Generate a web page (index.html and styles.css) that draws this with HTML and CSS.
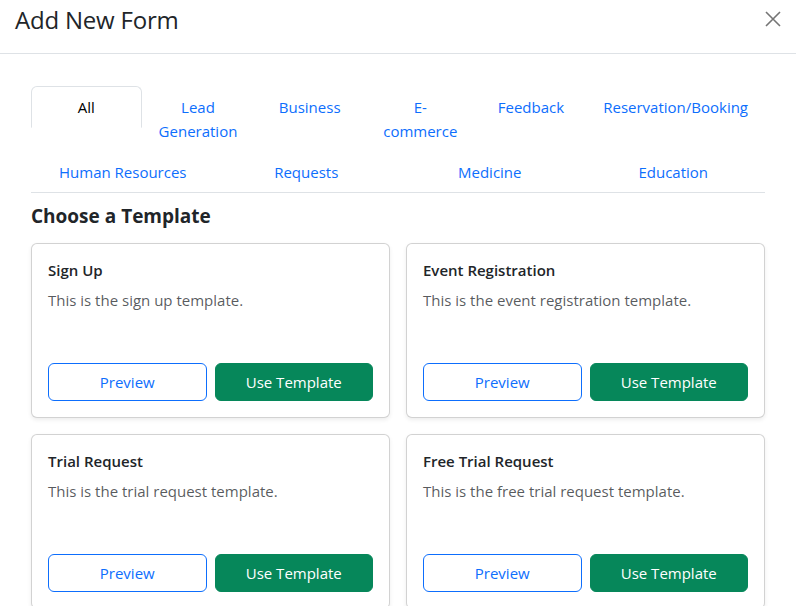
FILE: index.html
```html
<!DOCTYPE html>
<html lang="en">
<head>
<meta charset="utf-8">
<title>Add New Form</title>
<link rel="stylesheet" href="styles.css">
</head>
<body>
<div class="modal">
  <div class="modal-header">
    <h4 class="modal-title">Add New Form</h4>
    <button class="btn-close" aria-label="Close">
      <svg width="16" height="16" viewBox="0 0 16 16"><path d="M1 1L15 15M15 1L1 15" stroke="currentColor" stroke-width="1.6" fill="none"/></svg>
    </button>
  </div>
  <div class="modal-body">
    <div class="nav-tabs">
      <div class="tab-row">
        <button class="nav-link active">All</button>
        <button class="nav-link">Lead Generation</button>
        <button class="nav-link">Business</button>
        <button class="nav-link">E-commerce</button>
        <button class="nav-link">Feedback</button>
        <button class="nav-link">Reservation/Booking</button>
      </div>
      <div class="tab-row">
        <button class="nav-link">Human Resources</button>
        <button class="nav-link">Requests</button>
        <button class="nav-link">Medicine</button>
        <button class="nav-link">Education</button>
      </div>
    </div>
    <h5 class="section-title">Choose a Template</h5>
    <div class="card-grid">
      <div class="card">
        <h6 class="card-title">Sign Up</h6>
        <p class="card-text">This is the sign up template.</p>
        <div class="card-actions">
          <button class="btn btn-outline">Preview</button>
          <button class="btn btn-success">Use Template</button>
        </div>
      </div>
      <div class="card">
        <h6 class="card-title">Event Registration</h6>
        <p class="card-text">This is the event registration template.</p>
        <div class="card-actions">
          <button class="btn btn-outline">Preview</button>
          <button class="btn btn-success">Use Template</button>
        </div>
      </div>
      <div class="card">
        <h6 class="card-title">Trial Request</h6>
        <p class="card-text">This is the trial request template.</p>
        <div class="card-actions">
          <button class="btn btn-outline">Preview</button>
          <button class="btn btn-success">Use Template</button>
        </div>
      </div>
      <div class="card">
        <h6 class="card-title">Free Trial Request</h6>
        <p class="card-text">This is the free trial request template.</p>
        <div class="card-actions">
          <button class="btn btn-outline">Preview</button>
          <button class="btn btn-success">Use Template</button>
        </div>
      </div>
    </div>
  </div>
</div>
</body>
</html>
```

FILE: styles.css
```css
* { box-sizing: border-box; }

html, body {
  margin: 0;
  padding: 0;
  background: #fff;
}

body {
  font-family: "Open Sans", "Noto Sans", sans-serif;
  font-size: 15px;
  line-height: 1.6;
  color: #212529;
  overflow: hidden;
}

.modal {
  width: 796px;
  background: #fff;
}

.modal-header {
  display: flex;
  align-items: flex-start;
  justify-content: space-between;
  height: 54px;
  padding: 5px 15px 0 15px;
  border-bottom: 1px solid #dee2e6;
}

.modal-title {
  margin: 0;
  font-size: 24px;
  font-weight: 500;
  line-height: 30px;
  color: #212529;
  letter-spacing: -0.2px;
}

.btn-close {
  border: 0;
  background: transparent;
  padding: 0;
  width: 16px;
  height: 16px;
  margin-top: 6px;
  color: #757575;
  cursor: pointer;
  display: flex;
}

.modal-body {
  padding: 32px 31px 0 31px;
}

.nav-tabs {
  border-bottom: 1px solid #dee2e6;
}

.tab-row {
  display: flex;
  align-items: flex-start;
}

.nav-link {
  flex: 1 1 0;
  font: inherit;
  line-height: 24px;
  color: #0d6efd;
  background: transparent;
  border: 1px solid transparent;
  border-top-left-radius: 6px;
  border-top-right-radius: 6px;
  padding: 8px 16px;
  margin-bottom: -1px;
  text-align: center;
  cursor: pointer;
}

.nav-link.active {
  color: #000;
  background: #fff;
  border-color: #dee2e6 #dee2e6 #fff;
}

.section-title {
  margin: 11px 0 15px 0;
  font-size: 19px;
  font-weight: 700;
  line-height: 24px;
  color: #212529;
}

.card-grid {
  display: grid;
  grid-template-columns: 1fr 1fr;
  gap: 16px;
}

.card {
  display: flex;
  flex-direction: column;
  height: 175px;
  padding: 16px;
  border: 1px solid rgba(0, 0, 0, 0.175);
  border-radius: 6px;
  box-shadow: 0 2px 4px rgba(0, 0, 0, 0.075);
  background: #fff;
}

.card-title {
  margin: 0 0 8px 0;
  font-size: 15px;
  font-weight: 600;
  line-height: 20px;
  color: #212529;
}

.card-text {
  margin: 0;
  line-height: 24px;
  color: rgba(33, 37, 41, 0.75);
}

.card-actions {
  margin-top: auto;
  display: grid;
  grid-template-columns: 1fr 1fr;
  gap: 8px;
}

.btn {
  font: inherit;
  line-height: 24px;
  padding: 6px 12px;
  border-radius: 6px;
  border: 1px solid transparent;
  cursor: pointer;
}

.btn-outline {
  color: #0d6efd;
  border-color: #0d6efd;
  background: #fff;
}

.btn-success {
  color: #fff;
  background: #06875a;
  border-color: #06875a;
}
```
